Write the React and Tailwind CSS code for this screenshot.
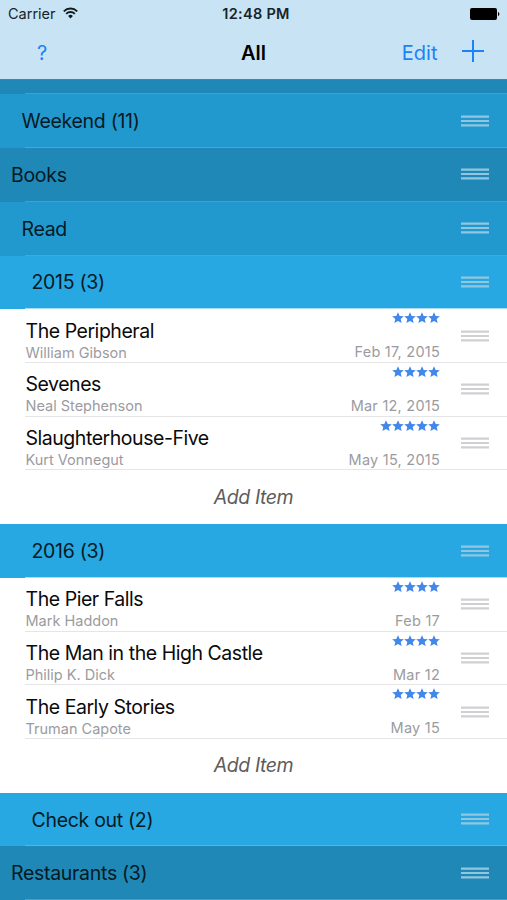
import React from 'react';

const rows = [
    { type: 'group', level: 1, title: 'Weekend (11)' },
    { type: 'group', level: 0, title: 'Books' },
    { type: 'group', level: 1, title: 'Read' },
    { type: 'group', level: 2, title: '2015 (3)' },
    { type: 'item', title: 'The Peripheral', author: 'William Gibson', date: 'Feb 17, 2015', stars: 4 },
    { type: 'item', title: 'Sevenes', author: 'Neal Stephenson', date: 'Mar 12, 2015', stars: 4 },
    { type: 'item', title: 'Slaughterhouse-Five', author: 'Kurt Vonnegut', date: 'May 15, 2015', stars: 5 },
    { type: 'add' },
    { type: 'group', level: 2, title: '2016 (3)' },
    { type: 'item', title: 'The Pier Falls', author: 'Mark Haddon', date: 'Feb 17', stars: 4 },
    { type: 'item', title: 'The Man in the High Castle', author: 'Philip K. Dick', date: 'Mar 12', stars: 4 },
    { type: 'item', title: 'The Early Stories', author: 'Truman Capote', date: 'May 15', stars: 4 },
    { type: 'add' },
    { type: 'group', level: 2, title: 'Check out (2)' },
    { type: 'group', level: 0, title: 'Restaurants (3)' },
];

// one entry per nesting level
const levels = [
    { bg: 'bg-[#1f88b6]', indent: 'pl-[11px]', line: 'bg-[#469fc5]' },
    { bg: 'bg-[#2299ce]', indent: 'pl-[21.5px]', line: 'bg-[#46a8d3]' },
    { bg: 'bg-[#27a8e2]', indent: 'pl-[31.5px]', line: 'bg-[#55b5e2]' },
];

const Handle = ({ light }) => (
    <svg width="28" height="12" viewBox="0 0 28 12" className={light ? 'text-[#92c5df]' : 'text-[#d0d0d3]'}>
        <path d="M0 1.600h28M0 6h28M0 10.400h28" stroke="currentColor" strokeWidth="2.2" />
    </svg>
);

const Star = () => (
    <svg width="12" height="12" viewBox="0 0 12 12" fill="#4287ea">
        <path d="M6 .2 7.700 3.900l4.100.4-3.100 2.700.9 4.100L6 9l-3.600 2.100.9-4.100L.2 4.300l4.100-.4z" />
    </svg>
);

const GroupRow = ({ row, last }) => {
    const { bg, indent, line } = levels[row.level];
    return (
        <div className={`flex h-[53.72px] flex-col ${bg}`}>
            <div className={`flex flex-1 items-center justify-between pr-[18px] ${indent}`}>
                <span className="pt-px text-[19.5px] leading-6 tracking-[-0.3px] text-[#051a24]">{row.title}</span>
                <Handle light />
            </div>
            <div className={`ml-[25px] h-px ${last ? 'bg-[#a9dcf4]' : line}`} />
        </div>
    );
};

const ItemRow = ({ row }) => (
    <div className="flex h-[53.72px] flex-col bg-white">
        <div className="flex flex-1 items-center pl-[25.5px] pr-[18px]">
            <div className="flex flex-1 flex-col self-start pt-[9.4px]">
                <span className="text-[19.5px] leading-6 tracking-[-0.46px] text-[#0a0a0a]">{row.title}</span>
                <span className="text-[14.5px] leading-[19px] text-[#9b9b9f]">{row.author}</span>
            </div>
            <div className="mr-[21px] flex flex-col items-end self-start pt-[3px]">
                <div className="flex">
                    {Array.from({ length: row.stars }, (_, i) => <Star key={i} />)}
                </div>
                <span className="mt-[18px] text-[14.5px] leading-[19px] tracking-[0.24px] text-[#9b9b9f]">{row.date}</span>
            </div>
            <Handle />
        </div>
        <div className="ml-[25px] h-px bg-[#e5e5e8]" />
    </div>
);

const AddRow = () => (
    <div className="flex h-[53.72px] items-center justify-center bg-white text-[19.5px] italic tracking-[-0.45px] text-[#5c5c5c]">
        Add Item
    </div>
);

const Header = () => (
    <header className="h-[79px] bg-[#c8e4f4]">
        <div className="grid h-[28px] grid-cols-[1fr_auto_1fr] items-center pl-2 pr-[7px] text-[14.5px] text-[#17232a]">
            <div className="flex items-center gap-[7px]">
                <span>Carrier</span>
                <svg width="15" height="12" viewBox="0 0 15 12" fill="none" stroke="#111b20" strokeWidth="1.9" className="mb-[2px]">
                    <path d="M.8 4.300a9.500 9.500 0 0 1 13.400 0M3.200 6.800a6.100 6.100 0 0 1 8.600 0" />
                    <path d="M5.100 9a3.400 3.400 0 0 1 4.800 0L7.500 11.500z" fill="#111b20" stroke="none" />
                </svg>
            </div>
            <span className="pl-[4px] text-center font-semibold tracking-[0.3px]">12:48 PM</span>
            <svg width="30" height="12" viewBox="0 0 30 12" className="mb-px justify-self-end">
                <rect width="27" height="12" rx="2" fill="#000" />
                <path d="M28 4c1.800.500 1.800 3.500 0 4z" fill="#000" />
            </svg>
        </div>
        <div className="grid h-[49px] grid-cols-[1fr_auto_1fr] items-center px-[23.5px] text-[20px] text-[#1a83f7]">
            <span className="pl-[13.5px]">?</span>
            <h1 className="text-center font-semibold text-black">All</h1>
            <div className="flex items-center justify-end gap-[24px]">
                <span>Edit</span>
                <svg width="22" height="22" viewBox="0 0 22 22" className="mb-[3px]">
                    <path d="M11 0v22M0 11h22" stroke="currentColor" strokeWidth="2" />
                </svg>
            </div>
        </div>
    </header>
);

const App = () => {
    return (
        <div className="h-[900px] w-[507px] overflow-hidden bg-white font-['Inter','Liberation_Sans',sans-serif]">
            <Header />
            {/* bottom edge of the row scrolled under the header */}
            <div className="flex h-[15.4px] flex-col justify-end border-t border-[#3889ad] bg-[#1f88b6]">
                <div className="ml-[25px] h-px bg-[#469fc5]" />
            </div>
            {rows.map((row, index) => {
                if (row.type === 'group') {
                    const next = rows[index + 1];
                    return <GroupRow key={index} row={row} last={next?.type === 'item'} />;
                }
                if (row.type === 'item') return <ItemRow key={index} row={row} />;
                return <AddRow key={index} />;
            })}
        </div>
    );
};

export default App;
